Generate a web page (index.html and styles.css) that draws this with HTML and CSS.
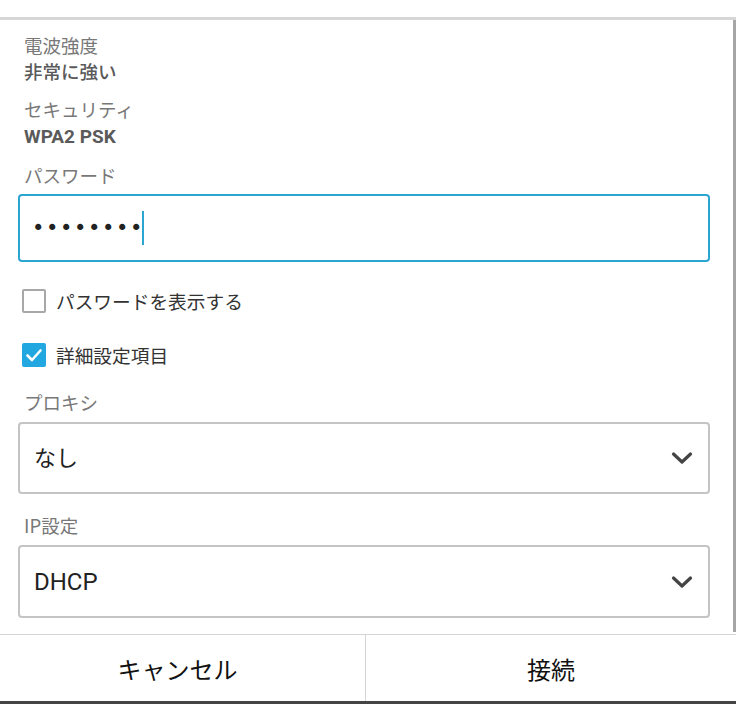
FILE: index.html
```html
<!DOCTYPE html>
<html lang="ja">
<head>
<meta charset="utf-8">
<link rel="stylesheet" href="styles.css">
</head>
<body>
<div class="topbar"></div>
<div class="dialog">
  <div class="content">
    <div class="scrollbar"></div>
    <div class="info">
      <div class="label l1">電波強度</div>
      <div class="value">非常に強い</div>
      <div class="label l2">セキュリティ</div>
      <div class="value bold">WPA2 PSK</div>
      <div class="label l3">パスワード</div>
    </div>
    <div class="input">
      <span class="dots">••••••••</span><span class="caret"></span>
    </div>
    <div class="check c1">
      <span class="box"></span><span class="ctext">パスワードを表示する</span>
    </div>
    <div class="check c2">
      <span class="box on"><svg width="24" height="24" viewBox="0 0 24 24"><path d="M5.5 12.5 L10 17 L18.5 7.5" fill="none" stroke="#fff" stroke-width="2.6" stroke-linecap="round" stroke-linejoin="round"/></svg></span><span class="ctext">詳細設定項目</span>
    </div>
    <div class="label l4">プロキシ</div>
    <div class="select s1">
      <span class="stext">なし</span>
      <svg class="chev" width="22" height="14" viewBox="0 0 22 14"><path d="M2.5 3 L11 11 L19.5 3" fill="none" stroke="#444" stroke-width="3.2" stroke-linecap="round" stroke-linejoin="round"/></svg>
    </div>
    <div class="label l5">IP設定</div>
    <div class="select s2">
      <span class="stext">DHCP</span>
      <svg class="chev" width="22" height="14" viewBox="0 0 22 14"><path d="M2.5 3 L11 11 L19.5 3" fill="none" stroke="#444" stroke-width="3.2" stroke-linecap="round" stroke-linejoin="round"/></svg>
    </div>
  </div>
  <div class="buttons">
    <div class="btn left">キャンセル</div>
    <div class="btn right">接続</div>
  </div>
</div>
<div class="bottombar"></div>
</body>
</html>
```
FILE: styles.css
```css
* { box-sizing: border-box; }
html, body {
  margin: 0;
  padding: 0;
  background: #fff;
  width: 736px;
  height: 704px;
  overflow: hidden;
  font-family: "Noto Sans CJK JP", "Roboto", "Noto Sans", sans-serif;
}
.topbar {
  height: 20px;
  border-bottom: 3px solid #d6d6d6;
}
.dialog {
  height: 681px;
  display: flex;
  flex-direction: column;
}
.content {
  position: relative;
  height: 614px;
  padding: 0 0 0 18px;
}
.scrollbar {
  position: absolute;
  right: 0;
  top: 0;
  width: 3px;
  height: 612px;
  background: #a6a6a6;
}
.info {
  padding-left: 6px;
  padding-top: 12px;
}
.label {
  font-size: 18.5px;
  line-height: 26px;
  color: #787878;
}
.value {
  font-size: 18.5px;
  line-height: 26px;
  color: #5a5a5a;
  font-weight: 500;
}
.value.bold {
  font-family: "Roboto", "Noto Sans CJK JP", sans-serif;
  font-weight: 700;
  font-size: 19px;
  margin-top: 2px;
}
.l2 { margin-top: 12px; }
.l3 { margin-top: 12px; }
.input {
  margin-top: 6px;
  width: 692px;
  height: 68px;
  border: 2px solid #2ba6d1;
  border-radius: 4px;
  display: flex;
  align-items: center;
  padding-left: 12px;
}
.dots {
  font-family: "DejaVu Sans", sans-serif;
  font-size: 21px;
  letter-spacing: 1.6px;
  color: #222;
  line-height: 20px;
}
.caret {
  display: inline-block;
  width: 2px;
  height: 34px;
  background: #2ba6d1;
  margin-left: -2px;
}
.check {
  display: flex;
  align-items: center;
  padding-left: 4px;
}
.c1 { margin-top: 27px; }
.c2 { margin-top: 30px; }
.box {
  width: 24px;
  height: 24px;
  border: 2px solid #a8a8a8;
  border-radius: 2px;
  display: flex;
  align-items: center;
  justify-content: center;
}
.box.on {
  background: #22a7e0;
  border-color: #22a7e0;
}
.box svg { flex: none; }
.ctext {
  margin-left: 10px;
  font-size: 18.7px;
  line-height: 24px;
  color: #333;
}
.l4 { margin-top: 22px; padding-left: 6px; }
.l5 { margin-top: 18px; padding-left: 6px; }
.select {
  margin-top: 7px;
  width: 692px;
  height: 72px;
  border: 2px solid #c4c4c4;
  border-radius: 4px;
  display: flex;
  align-items: center;
  justify-content: space-between;
  padding: 0 15px 0 14px;
}
.s2 { margin-top: 7px; height: 73px; }
.stext {
  font-size: 22px;
  color: #222;
}
.s1 .stext { padding-bottom: 4px; }
.s2 .stext { font-family: "Roboto", "Noto Sans CJK JP", sans-serif; font-size: 24px; }
.buttons {
  border-top: 1.5px solid #d4d4d4;
  display: flex;
  flex: 1;
}
.btn {
  display: flex;
  align-items: center;
  justify-content: center;
  font-size: 24px;
  color: #111;
}
.btn.left {
  width: 365px;
  padding-right: 10px;
}
.btn.right {
  flex: 1;
  border-left: 1.5px solid #d4d4d4;
}
.bottombar {
  height: 3px;
  background: #444;
}
```
